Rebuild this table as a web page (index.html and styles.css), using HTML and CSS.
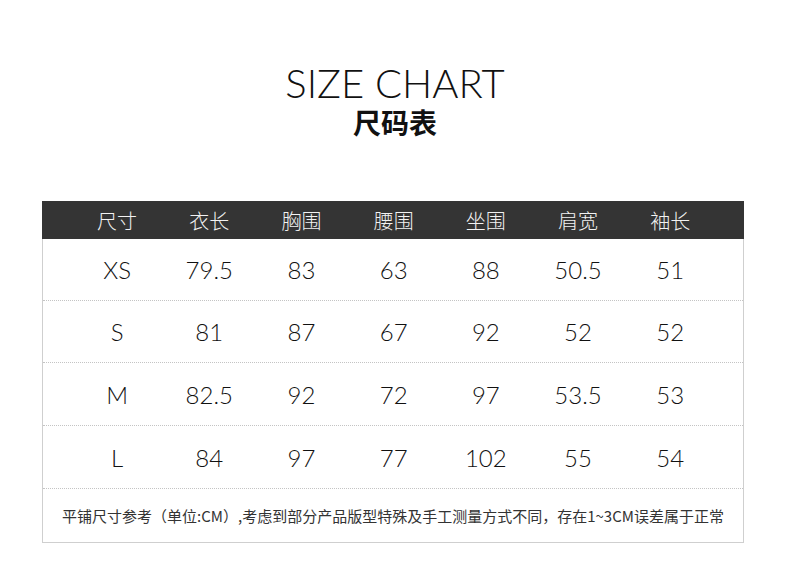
FILE: index.html
```html
<!DOCTYPE html>
<html lang="zh">
<head>
<meta charset="utf-8">
<title>Size Chart</title>
<link rel="stylesheet" href="styles.css">
</head>
<body>
<div class="page">
  <header class="title">
    <h1 class="title-en">SIZE CHART</h1>
    <h2 class="title-zh">尺码表</h2>
  </header>
  <section class="chart">
    <div class="row head">
      <span>尺寸</span><span>衣长</span><span>胸围</span><span>腰围</span><span>坐围</span><span>肩宽</span><span>袖长</span>
    </div>
    <div class="row data">
      <span>XS</span><span>79.5</span><span>83</span><span>63</span><span>88</span><span>50.5</span><span>51</span>
    </div>
    <div class="row data">
      <span>S</span><span>81</span><span>87</span><span>67</span><span>92</span><span>52</span><span>52</span>
    </div>
    <div class="row data tall">
      <span>M</span><span>82.5</span><span>92</span><span>72</span><span>97</span><span>53.5</span><span>53</span>
    </div>
    <div class="row data tall">
      <span>L</span><span>84</span><span>97</span><span>77</span><span>102</span><span>55</span><span>54</span>
    </div>
    <p class="note">平铺尺寸参考（单位:CM）,考虑到部分产品版型特殊及手工测量方式不同，存在1~3CM误差属于正常</p>
  </section>
</div>
</body>
</html>
```
FILE: styles.css
```css
html, body {
  margin: 0;
  padding: 0;
  background: #ffffff;
}
.page {
  width: 790px;
  height: 567px;
  overflow: hidden;
}
.title {
  display: flex;
  flex-direction: column;
  align-items: center;
  padding-top: 59px;
}
.title-en {
  margin: 0;
  font-family: "Lato", "DejaVu Sans", sans-serif;
  font-weight: 300;
  font-size: 40px;
  line-height: 48px;
  color: #111;
}
.title-zh {
  margin: 0;
  font-family: "Noto Sans CJK SC", sans-serif;
  font-weight: 700;
  font-size: 28px;
  line-height: 30px;
  color: #111;
}
.chart {
  margin: 64px 0 0 42px;
  width: 702px;
  box-sizing: border-box;
  border: 1px solid #cfcfcf;
  border-top: none;
}
.row {
  display: grid;
  grid-template-columns: repeat(7, 92.2px);
  padding-left: 28px;
  align-items: center;
  justify-items: center;
}
.head {
  height: 38px;
  margin: 0 -1px;
  padding-left: 29px;
  background: #343434;
  color: #f2f2f2;
  font-family: "Noto Sans CJK SC", sans-serif;
  font-weight: 300;
  font-size: 20px;
}
.data {
  height: 61px;
  border-bottom: 1px dotted #c4c4c4;
  font-family: "Lato", "DejaVu Sans", sans-serif;
  font-weight: 300;
  font-size: 24px;
  color: #111;
}
.data.tall {
  height: 62px;
}
.note {
  margin: 0;
  height: 53px;
  display: flex;
  align-items: center;
  justify-content: center;
  font-family: "Noto Sans CJK SC", sans-serif;
  font-weight: 400;
  font-size: 15px;
  color: #333;
}
```
